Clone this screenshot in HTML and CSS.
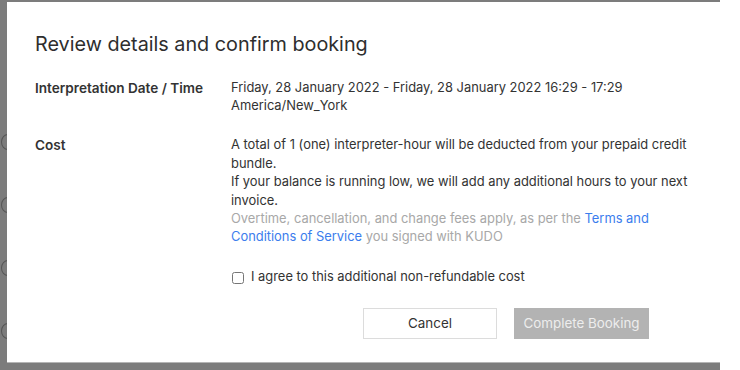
FILE: index.html
```html
<!DOCTYPE html>
<html>
<head>
<meta charset="utf-8">
<link rel="stylesheet" href="styles.css">
</head>
<body>
<div class="backdrop">
  <div class="bg-rows">
    <span class="arc a1"></span>
    <span class="arc a2"></span>
    <span class="arc a3"></span>
    <span class="arc a4"></span>
  </div>
  <div class="modal">
    <h1 class="title">Review details and confirm booking</h1>
    <div class="details">
      <div class="label">Interpretation Date / Time</div>
      <div class="value">Friday, 28 January 2022 - Friday, 28 January 2022 16:29 - 17:29<br>America/New_York</div>
      <div class="label">Cost</div>
      <div class="value">
        <p class="para">A total of 1 (one) interpreter-hour will be deducted from your prepaid credit bundle.</p>
        <p class="para">If your balance is running low, we will add any additional hours to your next invoice.</p>
        <p class="para muted">Overtime, cancellation, and change fees apply, as per the <a class="link" href="#">Terms and Conditions of Service</a> you signed with KUDO</p>
        <label class="agree"><input type="checkbox" class="check"> <span>I agree to this additional non-refundable cost</span></label>
        <div class="actions">
          <button class="btn btn-cancel">Cancel</button>
          <button class="btn btn-complete" disabled>Complete Booking</button>
        </div>
      </div>
    </div>
  </div>
</div>
</body>
</html>
```
FILE: styles.css
```css
html, body {
  margin: 0;
  padding: 0;
  background: #ffffff;
}
body {
  width: 740px;
  height: 370px;
  overflow: hidden;
  font-family: Inter, "Liberation Sans", Arial, sans-serif;
  color: #333333;
}
.backdrop {
  position: relative;
  width: 720px;
  height: 370px;
  background: #7c7c7c;
  padding: 2px 0 0 7px;
  box-sizing: border-box;
}
.bg-rows .arc {
  position: absolute;
  left: 1px;
  width: 14px;
  height: 16px;
  border: 1px solid #555;
  border-radius: 50%;
  box-sizing: border-box;
}
.a1 { top: 134px; }
.a2 { top: 197px; }
.a3 { top: 260px; }
.a4 { top: 323px; }
.modal {
  position: relative;
  width: 713px;
  height: 361px;
  background: #ffffff;
  box-sizing: border-box;
  padding: 30px 28px 0 28px;
  border-bottom: 1px solid #b5b5b5;
}
.title {
  margin: 0;
  font-size: 19.8px;
  font-weight: normal;
  color: #2e2e2e;
  line-height: 24px;
}
.details {
  display: grid;
  grid-template-columns: 196px 1fr;
  row-gap: 20.6px;
  margin-top: 23px;
  font-size: 12.9px;
  line-height: 18.4px;
}
.label {
  font-weight: 600;
  font-size: 13.6px;
  color: #333;
}
.value {
  color: #333;
}
.para {
  margin: 0;
}
.muted {
  color: #a8a8a8;
}
.link {
  color: #3b7ded;
  text-decoration: none;
}
.agree {
  display: flex;
  align-items: center;
  gap: 7px;
  margin-top: 21.6px;
  color: #333;
}
.check {
  margin: 0 0 0 1px;
  width: 12px;
  height: 12px;
}
.actions {
  display: flex;
  gap: 17px;
  margin-top: 21px;
  padding-left: 132px;
}
.btn {
  width: 134px;
  height: 31px;
  font-family: inherit;
  font-size: 13.4px;
  box-sizing: border-box;
  border-radius: 0;
}
.btn-cancel {
  background: #ffffff;
  border: 1px solid #dcdcdc;
  color: #333;
}
.btn-complete {
  width: 135px;
  background: #b3b3b3;
  border: 1px solid #b3b3b3;
  color: #ededed;
}
```
